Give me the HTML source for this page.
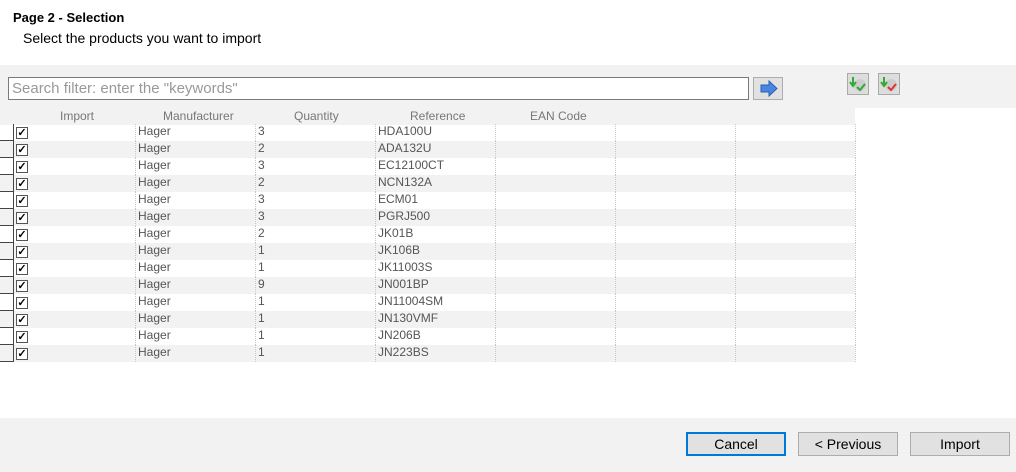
<!DOCTYPE html>
<html><head><style>
*{margin:0;padding:0;box-sizing:border-box}
body{width:1016px;height:472px;background:#fff;font-family:"Liberation Sans",Arial,sans-serif;position:relative;overflow:hidden}
.a{position:absolute}
.row{position:absolute;left:0;width:855px;height:17px;font-size:12px;color:#555;line-height:15px}
.row.g{background:#f2f2f2}
.row span{position:absolute;top:0}
.v{position:absolute;top:0;height:17px;border-left:1px dotted #c8c8c8}
.cb{position:absolute;left:16px;top:3px;width:12px;height:12px;border:1px solid #555;background:#fff;font-size:11px;line-height:10px;color:#000;text-align:center;font-weight:bold}
.rh{position:absolute;left:0;top:0;width:14px;height:17px;border-right:1px solid #444;border-bottom:1px solid #444}
.btn{position:absolute;top:432px;width:100px;height:24px;background:#e1e1e1;border:1px solid #adadad;font-size:14px;text-align:center;line-height:22px;color:#000}
.hd{position:absolute;top:109px;font-size:12px;color:#777}
</style></head><body>
<div class="a" style="left:13px;top:10px;font-size:13px;font-weight:bold;color:#000">Page 2 - Selection</div>
<div class="a" style="left:23px;top:30px;font-size:14px;color:#000">Select the products you want to import</div>
<div class="a" style="left:0;top:65px;width:1016px;height:43px;background:#f2f2f2"></div>
<div class="a" style="left:0;top:108px;width:855px;height:17px;background:#f2f2f2"></div>
<div class="a" style="left:8px;top:77px;width:741px;height:23px;background:#fff;border:1px solid #7a7a7a;font-size:15px;color:#999;padding-left:3px;line-height:21px">Search filter: enter the "keywords"</div>
<div class="a" style="left:753px;top:77px;width:30px;height:23px;background:#e1e1e1;border:1px solid #adadad">
<svg width="28" height="21" viewBox="0 0 28 21"><path d="M7 7h8V3l8 7.5-8 7.5v-4H7z" fill="#4a86e0" stroke="#2a5fb0" stroke-width="1"/></svg></div>
<div class="a" style="left:847px;top:73px;width:22px;height:22px;background:#ddd;border:1px solid #aaa">
<svg width="20" height="20"><circle cx="12" cy="11" r="6" fill="#ccc"/><path d="M5 3v8M2 8l3 4 3-4" stroke="#3a3" stroke-width="2" fill="none"/><path d="M9 13l3 3 5-6" stroke="#3a3" stroke-width="2" fill="none"/></svg></div>
<div class="a" style="left:878px;top:73px;width:22px;height:22px;background:#ddd;border:1px solid #aaa">
<svg width="20" height="20"><circle cx="12" cy="11" r="6" fill="#ccc"/><path d="M5 3v8M2 8l3 4 3-4" stroke="#3a3" stroke-width="2" fill="none"/><path d="M9 13l3 3 5-6" stroke="#d33" stroke-width="2" fill="none"/></svg></div>
<div class="hd" style="left:60px">Import</div>
<div class="hd" style="left:163px">Manufacturer</div>
<div class="hd" style="left:294px">Quantity</div>
<div class="hd" style="left:410px">Reference</div>
<div class="hd" style="left:530px">EAN Code</div>
<div id="rows"></div>
<script>
var d=[["3","HDA100U"],["2","ADA132U"],["3","EC12100CT"],["2","NCN132A"],["3","ECM01"],["3","PGRJ500"],["2","JK01B"],["1","JK106B"],["1","JK11003S"],["9","JN001BP"],["1","JN11004SM"],["1","JN130VMF"],["1","JN206B"],["1","JN223BS"]];
var h="";d.forEach(function(r,i){h+='<div class="row'+(i%2?' g':'')+'" style="top:'+(124+i*17)+'px"><div class="rh"></div><div class="cb">✓</div>';
[135,255,375,495,615,735,855].forEach(function(x){h+='<div class="v" style="left:'+x+'px"></div>'});
h+='<span style="left:138px">Hager</span><span style="left:258px">'+r[0]+'</span><span style="left:378px">'+r[1]+'</span></div>'});
document.getElementById("rows").innerHTML=h;
</script>
<div class="a" style="left:0;top:418px;width:1016px;height:54px;background:#f2f2f2"></div>
<div class="btn" style="left:686px;border:2px solid #0078d7;line-height:20px">Cancel</div>
<div class="btn" style="left:798px">&lt; Previous</div>
<div class="btn" style="left:910px">Import</div>
</body></html>
